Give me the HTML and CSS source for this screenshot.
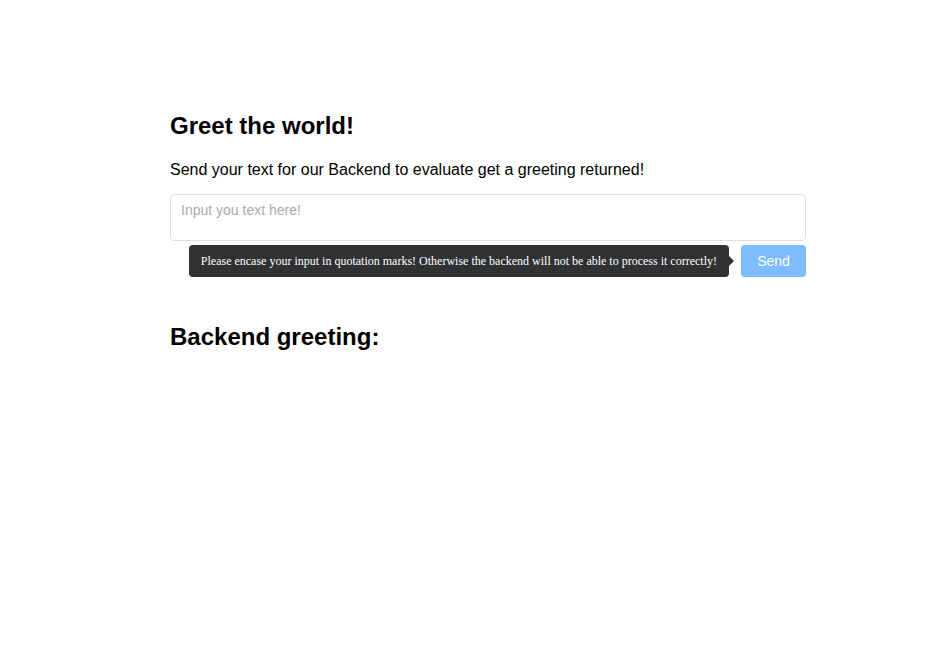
FILE: index.html
```html
<!DOCTYPE html>
<html>
<head>
<meta charset="utf-8">
<link rel="stylesheet" href="styles.css">
</head>
<body>
<main class="page">
  <h1 class="title">Greet the world!</h1>
  <p class="lead">Send your text for our Backend to evaluate get a greeting returned!</p>
  <textarea class="input" placeholder="Input you text here!"></textarea>
  <div class="actions">
    <div class="tooltip">Please encase your input in quotation marks! Otherwise the backend will not be able to process it correctly!</div>
    <button class="send" disabled>Send</button>
  </div>
  <h2 class="title result">Backend greeting:</h2>
</main>
</body>
</html>
```
FILE: styles.css
```css
html, body {
  margin: 0;
  padding: 0;
  background: #fff;
}
body {
  font-family: "Liberation Sans", Arial, sans-serif;
  color: #000;
}
.page {
  width: 636px;
  margin: 0 0 0 170px;
  padding-top: 111px;
}
.title {
  font-size: 24px;
  font-weight: bold;
  line-height: 30px;
  margin: 0;
}
.lead {
  font-size: 16px;
  line-height: 20px;
  margin: 19px 0 14px;
}
.input {
  display: block;
  box-sizing: border-box;
  width: 100%;
  height: 47px;
  border: 1px solid #dcdfe6;
  border-radius: 4px;
  padding: 5px 10px;
  font-family: "Liberation Sans", Arial, sans-serif;
  font-size: 14px;
  line-height: 21px;
  resize: none;
  outline: none;
}
.input::placeholder {
  color: #a8abb2;
}
.actions {
  display: flex;
  justify-content: flex-end;
  align-items: center;
  gap: 12px;
  margin-top: 4px;
}
.tooltip {
  position: relative;
  box-sizing: border-box;
  height: 32px;
  padding: 0 12px;
  display: flex;
  align-items: center;
  background: #303133;
  color: #fff;
  border-radius: 4px;
  font-family: "Liberation Serif", "Times New Roman", serif;
  font-size: 12px;
  white-space: nowrap;
}
.tooltip::after {
  content: "";
  position: absolute;
  right: -5px;
  top: 50%;
  margin-top: -5px;
  border-style: solid;
  border-width: 5px 0 5px 5px;
  border-color: transparent transparent transparent #303133;
}
.send {
  box-sizing: border-box;
  width: 65px;
  height: 32px;
  border: none;
  border-radius: 4px;
  background: #7dbcfe;
  color: #fff;
  font-family: "Liberation Sans", Arial, sans-serif;
  font-size: 14px;
  padding: 0;
}
.result {
  margin-top: 45px;
}
```
